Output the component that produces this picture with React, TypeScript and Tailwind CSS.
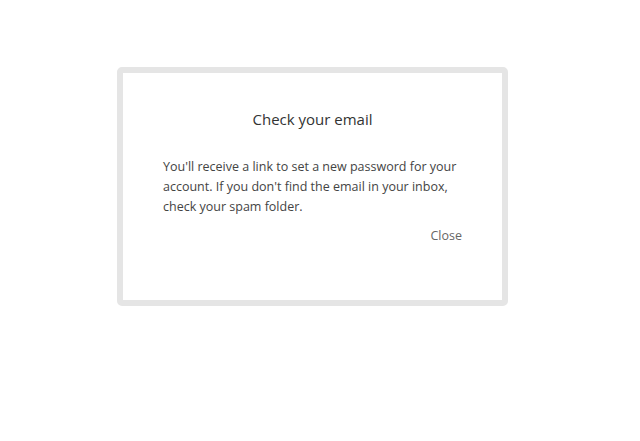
export default function App() {
  return (
    <div className="min-h-screen bg-white pt-[67px] font-['Open_Sans',sans-serif]">
      <div className="ml-[117px] w-[391px] rounded-[5px] border-[6px] border-[#e5e5e5] bg-white px-[40px] pb-[54px] pt-[31px]">
        <h2 className="text-center text-[15px] leading-[30px] text-[#333]">Check your email</h2>
        <p className="mt-[23px] text-[12.5px] leading-[20px] text-[#444]">
          You'll receive a link to set a new password for your account. If you don't find the email in your inbox,
          check your spam folder.
        </p>
        <div className="mt-[9px] flex justify-end">
          <button className="text-[12.5px] leading-[20px] text-[#666]">Close</button>
        </div>
      </div>
    </div>
  );
}
